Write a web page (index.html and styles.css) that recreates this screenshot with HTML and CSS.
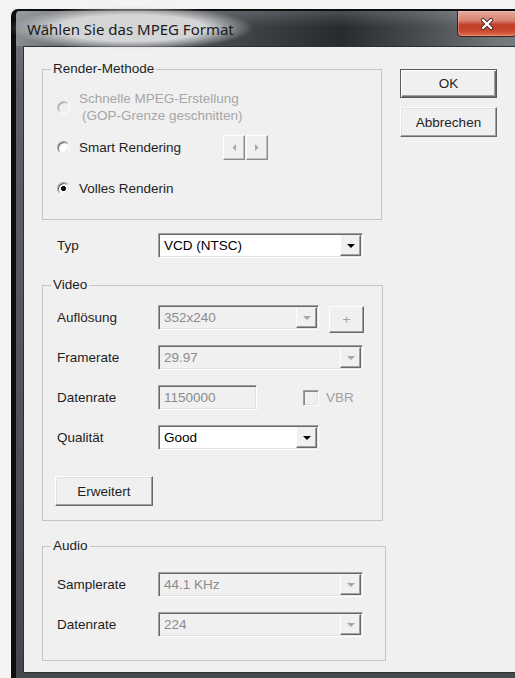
FILE: index.html
```html
<!DOCTYPE html>
<html lang="de">
<head>
<meta charset="utf-8">
<title>Wählen Sie das MPEG Format</title>
<link rel="stylesheet" href="styles.css">
</head>
<body>
<div class="window">
  <div class="titlebar">
    <span class="title">Wählen Sie das MPEG Format</span>
    <div class="close" role="button" aria-label="Schließen">
      <svg width="16" height="14" viewBox="0 0 16 14">
        <path d="M4 3 L12 11 M12 3 L4 11" stroke="#4a2a22" stroke-width="4.2" stroke-linecap="round" fill="none"/>
        <path d="M4 3 L12 11 M12 3 L4 11" stroke="#ffffff" stroke-width="2.4" stroke-linecap="round" fill="none"/>
      </svg>
    </div>
  </div>

  <div class="client">
    <div class="main">
      <fieldset class="group group-render">
        <legend>Render-Methode</legend>
        <div class="render-body">
          <div class="option disabled">
            <span class="radio"></span>
            <span>Schnelle MPEG-Erstellung<span class="indent">(GOP-Grenze geschnitten)</span></span>
          </div>
          <div class="option option-smart">
            <span class="radio"></span>
            <span class="option-label">Smart Rendering</span>
            <span class="spin">
              <span class="spin-btn">
                <svg width="4" height="7" viewBox="0 0 4 7"><polygon points="4,0 4,7 0.5,3.5" fill="#a8a8a8"/></svg>
              </span>
              <span class="spin-btn">
                <svg width="4" height="7" viewBox="0 0 4 7"><polygon points="0,0 0,7 3.5,3.5" fill="#a8a8a8"/></svg>
              </span>
            </span>
          </div>
          <div class="option option-full">
            <span class="radio checked"></span>
            <span>Volles Renderin</span>
          </div>
        </div>
      </fieldset>

      <div class="field-row typ-row">
        <span class="field-label">Typ</span>
        <div class="combo w-full">
          <span class="combo-value">VCD (NTSC)</span>
          <span class="combo-arrow"><svg width="8" height="4" viewBox="0 0 8 4"><polygon points="0,0 8,0 4,4" fill="#000"/></svg></span>
        </div>
      </div>

      <fieldset class="group group-video">
        <legend>Video</legend>
        <div class="video-body rows">
          <div class="field-row row-plus">
            <span class="field-label">Auflösung</span>
            <div class="combo w-short is-disabled">
              <span class="combo-value">352x240</span>
              <span class="combo-arrow"><svg width="8" height="4" viewBox="0 0 8 4"><polygon points="0,0 8,0 4,4" fill="#a6a6a6"/></svg></span>
            </div>
            <span class="plus-btn">+</span>
          </div>
          <div class="field-row">
            <span class="field-label">Framerate</span>
            <div class="combo w-full is-disabled">
              <span class="combo-value">29.97</span>
              <span class="combo-arrow"><svg width="8" height="4" viewBox="0 0 8 4"><polygon points="0,0 8,0 4,4" fill="#a6a6a6"/></svg></span>
            </div>
          </div>
          <div class="field-row">
            <span class="field-label">Datenrate</span>
            <div class="combo w-input is-disabled">
              <span class="combo-value">1150000</span>
            </div>
            <span class="check"></span>
            <span class="check-label">VBR</span>
          </div>
          <div class="field-row">
            <span class="field-label">Qualität</span>
            <div class="combo w-short">
              <span class="combo-value">Good</span>
              <span class="combo-arrow"><svg width="8" height="4" viewBox="0 0 8 4"><polygon points="0,0 8,0 4,4" fill="#000"/></svg></span>
            </div>
          </div>
          <div class="btn btn-wide" role="button">Erweitert</div>
        </div>
      </fieldset>

      <fieldset class="group group-audio">
        <legend>Audio</legend>
        <div class="audio-body rows">
          <div class="field-row">
            <span class="field-label">Samplerate</span>
            <div class="combo w-full is-disabled">
              <span class="combo-value">44.1 KHz</span>
              <span class="combo-arrow"><svg width="8" height="4" viewBox="0 0 8 4"><polygon points="0,0 8,0 4,4" fill="#a6a6a6"/></svg></span>
            </div>
          </div>
          <div class="field-row">
            <span class="field-label">Datenrate</span>
            <div class="combo w-full is-disabled">
              <span class="combo-value">224</span>
              <span class="combo-arrow"><svg width="8" height="4" viewBox="0 0 8 4"><polygon points="0,0 8,0 4,4" fill="#a6a6a6"/></svg></span>
            </div>
          </div>
        </div>
      </fieldset>
    </div>

    <div class="actions">
      <div class="btn btn-default" role="button">OK</div>
      <div class="btn" role="button">Abbrechen</div>
    </div>
  </div>
</div>
</body>
</html>
```

FILE: styles.css
```css
* {
  box-sizing: border-box;
}

html,
body {
  margin: 0;
}

body {
  width: 515px;
  height: 678px;
  overflow: hidden;
  background: #f3f3f3;
  font-family: "Liberation Sans", Arial, sans-serif;
  font-size: 13.5px;
  color: #1e1e1e;
}

/* Window frame (Aero basic, dark) */
.window {
  width: 530px;
  margin: 9px 0 0 11px;
  padding-bottom: 10px;
  border: 2px solid #0d0d0d;
  border-left-width: 5px;
  border-radius: 7px 7px 0 0;
  background: linear-gradient(180deg, #7a7e82 0, #5e6266 80px, #44474b 100%);
  display: flex;
  flex-direction: column;
}

.titlebar {
  height: 35px;
  flex: none;
  display: flex;
  align-items: flex-start;
  padding-left: 11px;
  border-radius: 5px 5px 0 0;
  background:
    linear-gradient(180deg, rgba(255, 255, 255, 0.16), rgba(255, 255, 255, 0) 45%),
    linear-gradient(90deg, #8a8d90 0, #6c7074 8%, #3a3e42 48%, #272b2f 62%, #4a4e52 78%, #72767a 92%, #7c8084 100%);
}

.title {
  position: relative;
  z-index: 0;
  margin-top: 8px;
  font-family: "Noto Sans", "Open Sans", sans-serif;
  font-size: 15px;
  line-height: 20px;
  color: #1b1b1b;
  white-space: nowrap;
}

/* soft glow behind the caption text */
.title::before {
  content: "";
  position: absolute;
  z-index: -1;
  left: -18px;
  right: -20px;
  top: -13px;
  bottom: -11px;
  background: radial-gradient(closest-side, rgba(212, 213, 214, 1) 60%, rgba(212, 213, 214, 0));
}

.close {
  margin-left: auto;
  margin-right: 22px;
  width: 60px;
  height: 26px;
  flex: none;
  border: 1px solid #3b1c17;
  border-top: none;
  border-radius: 0 0 5px 5px;
  background: linear-gradient(180deg, #e4ab9e 0, #d88370 38%, #c2402a 55%, #c6452d 75%, #df6d4c 100%);
  box-shadow: inset 0 0 0 1px rgba(255, 220, 210, 0.35);
  display: flex;
  align-items: center;
  justify-content: center;
}

/* Dialog client area */
.client {
  margin: 0 7px;
  height: 627px;
  flex: none;
  border: 1px solid #2c2f33;
  background: #f0f0f0;
  display: flex;
  align-items: flex-start;
  padding: 14px 0 0 18px;
}

.main {
  width: 345px;
  flex: none;
}

.actions {
  margin: 8px 0 0 13px;
  display: flex;
  flex-direction: column;
  gap: 9px;
}

/* Raised push buttons */
.btn {
  width: 97px;
  height: 29px;
  display: flex;
  align-items: center;
  justify-content: center;
  background: #f0f0f0;
  border: 1px solid;
  border-color: #ffffff #696969 #696969 #ffffff;
  box-shadow: inset -1px -1px 0 #a0a0a0, inset 1px 1px 0 #e3e3e3;
  color: #1e1e1e;
}

.btn + .btn {
  height: 30px;
}

.btn-default {
  border-color: #5a5a5a;
  box-shadow: inset 1px 1px 0 #ffffff, inset -1px -1px 0 #696969, inset -2px -2px 0 #a0a0a0;
}

.btn-wide {
  width: 98px;
  height: 30px;
  margin-top: 11px;
  margin-left: -2px;
}

/* Group boxes */
.group {
  margin: 0;
  padding: 0;
  min-width: 0;
  border: 1px solid #c5c5c5;
}

.group legend {
  margin-left: 8px;
  padding: 0 2px;
  line-height: 16px;
}

.group-render {
  width: 340px;
}

.group-video {
  width: 341px;
  margin-top: 19px;
}

.group-audio {
  width: 344px;
  margin-top: 17px;
}

.render-body {
  padding: 13px 0 22px 14px;
}

.option {
  display: flex;
  align-items: center;
  line-height: 17px;
}

.option-smart {
  margin-top: 11px;
}

.option-full {
  margin-top: 20px;
}

.option-label {
  width: 144px;
  flex: none;
}

.indent {
  display: block;
  padding-left: 3px;
}

.disabled {
  color: #a6a6a6;
}

/* Classic radio button */
.radio {
  width: 13px;
  height: 13px;
  flex: none;
  margin-right: 9px;
  border-radius: 50%;
  border: 1px solid;
  border-color: #a0a0a0 #ffffff #ffffff #a0a0a0;
  background: #ffffff;
  box-shadow: inset 1px 1px 0 #696969, inset -1px -1px 0 #e3e3e3;
}

.radio.checked {
  background: radial-gradient(circle, #111111 0, #111111 2.2px, #ffffff 2.9px);
}

.disabled .radio {
  background: #f0f0f0;
  border-color: #c4c4c4 #ffffff #ffffff #c4c4c4;
  box-shadow: inset 1px 1px 0 #a8a8a8;
}

.spin {
  display: flex;
  gap: 1px;
}

.spin-btn {
  width: 22px;
  height: 25px;
  display: flex;
  align-items: center;
  justify-content: center;
  background: #f0f0f0;
  border: 1px solid;
  border-color: #ffffff #8a8a8a #8a8a8a #ffffff;
  box-shadow: inset -1px -1px 0 #c0c0c0;
}

/* Label / field rows */
.field-row {
  display: flex;
  align-items: center;
}

.field-label {
  width: 101px;
  flex: none;
}

.typ-row {
  margin-top: 13px;
  padding-left: 15px;
}

.rows {
  display: flex;
  flex-direction: column;
  align-items: flex-start;
  gap: 15px;
}

.video-body {
  padding: 12px 0 14px 14px;
}

.audio-body {
  padding: 18px 0 23px 14px;
}

.row-plus {
  align-items: flex-start;
  margin-bottom: -3px;
}

.row-plus .field-label {
  line-height: 25px;
}

/* Sunken combo boxes and edit fields */
.combo {
  height: 25px;
  flex: none;
  display: flex;
  padding: 1px;
  border: 1px solid;
  border-color: #a0a0a0 #ffffff #ffffff #a0a0a0;
  box-shadow: inset 1px 1px 0 #696969, inset -1px -1px 0 #e3e3e3;
  background: #ffffff;
  color: #000000;
}

.combo.is-disabled {
  background: #f0f0f0;
  color: #8c8c8c;
}

.combo-value {
  flex: 1;
  padding: 1px 0 0 4px;
  line-height: 20px;
  white-space: nowrap;
}

.combo-arrow {
  width: 21px;
  flex: none;
  display: flex;
  align-items: center;
  justify-content: center;
  background: #f0f0f0;
  border: 1px solid;
  border-color: #f0f0f0 #696969 #696969 #ffffff;
  box-shadow: inset -1px -1px 0 #a0a0a0;
}

.w-full {
  width: 205px;
}

.w-short {
  width: 161px;
}

.w-input {
  width: 99px;
}

.plus-btn {
  width: 35px;
  height: 27px;
  margin: 1px 0 0 10px;
  display: flex;
  align-items: center;
  justify-content: center;
  color: #a0a0a0;
  background: #f0f0f0;
  border: 1px solid;
  border-color: #ffffff #696969 #696969 #ffffff;
  box-shadow: inset -1px -1px 0 #a0a0a0;
}

.check {
  width: 16px;
  height: 16px;
  flex: none;
  margin-left: 46px;
  border: 1px solid;
  border-color: #a0a0a0 #ffffff #ffffff #a0a0a0;
  box-shadow: inset 1px 1px 0 #8a8a8a, inset -1px -1px 0 #e3e3e3;
  background: #f0f0f0;
}

.check-label {
  margin-left: 7px;
  color: #a0a0a0;
}
```
